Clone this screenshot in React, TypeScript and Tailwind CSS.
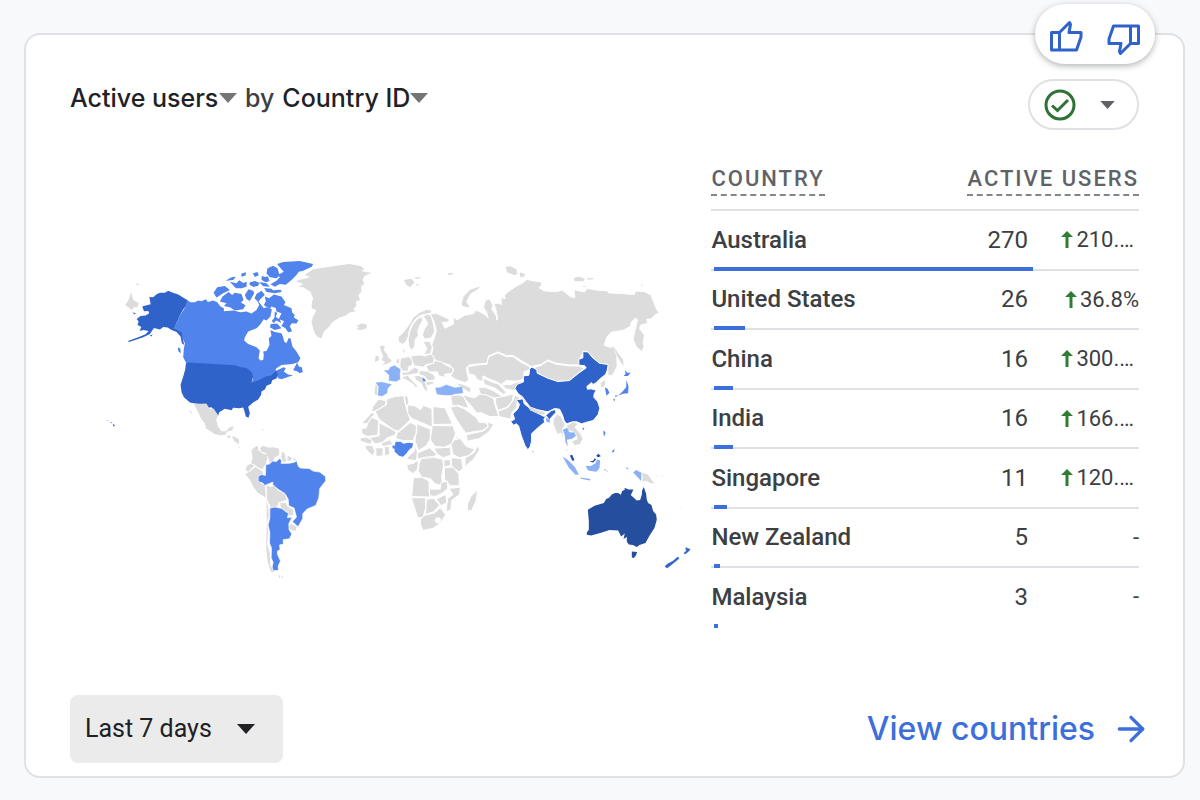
import { ArrowRight } from 'lucide-react'

interface CountryRow {
  country: string
  users: number
  change?: string
}

const rows: CountryRow[] = [
  { country: 'Australia', users: 270, change: '210.…' },
  { country: 'United States', users: 26, change: '36.8%' },
  { country: 'China', users: 16, change: '300.…' },
  { country: 'India', users: 16, change: '166.…' },
  { country: 'Singapore', users: 11, change: '120.…' },
  { country: 'New Zealand', users: 5 },
  { country: 'Malaysia', users: 3 }
]

const maxUsers = 270
const barShare = 74.5 // % of the table width taken by the longest bar

function Caret({ className }: { className: string }) {
  return (
    <svg viewBox="0 0 18 10" className={className} aria-hidden="true">
      <path d="M0 0h18L9 10z" fill="currentColor" />
    </svg>
  )
}

function ThumbIcon({ className = '' }: { className?: string }) {
  return (
    <svg viewBox="0 0 34 34" className={`h-[34px] w-[34px] ${className}`} fill="none" stroke="#2f62cb" strokeWidth="3" aria-hidden="true">
      <path d="M2.500 13.500h8v17.500h-8zM10.500 13.500L20.500 3.500l1 2-1.500 8H32v4.500l-4.500 13H10.500z" strokeLinejoin="round" />
    </svg>
  )
}

// Map shapes, grouped by region. Each region has its own origin.
function NorthAmerica() {
  return (
    <g>
      <g fill="#dcdcdc">
        <path d="M93 127L100 150 117 160 112 172 102 171 97 181 85 172 76 165 86 150ZM108 102l8-2 0 4-6 2z" />
        <path d="M588 93L610 87 632 82 615 75 640 58 680 52 720 46 750 42 785 49 793 57 785 63 800 67 817 68 795 77 788 90 794 100 784 110 785 125 776 135 781 150 768 155 770 168 760 177 768 184 750 188 738 197 720 203 700 215 684 235 672 245 665 265 655 262 645 250 640 235 635 215 640 200 650 180 637 176 635 165 640 145 632 125 610 112 595 110 610 103Z" />
      </g>
      <g fill="#5183ec">
        <path d="M264 152L272 157 285 157 295 152 305 154 318 148 324 156 340 152 352 157 362 170 372 175 372 184 400 182 422 187 440 185 455 191 470 180 478 165 472 150 482 162 492 175 500 172 516 178 512 200 500 212 492 208 480 225 470 235 445 245 435 262 433 272 445 282 470 292 480 302 476 325 482 332 490 330 492 315 490 305 500 303 509 285 507 265 515 258 512 240 525 246 545 250 550 262 553 275 560 280 566 265 572 265 578 290 590 305 602 325 595 337 578 342 545 345 530 355 520 370 530 362 552 352 558 355 552 365 565 374 580 376 562 382 545 388 535 385 530 375 500 384 475 394 455 400 460 385 445 365 430 356 405 349 262 341 250 320 252 295 255 280 245 258 223 235 237 202 258 168Z" />
        <path d="M532 42L550 36 600 33 640 42 636 50 610 62 597 65 590 75 575 90 558 104 540 102 525 110 512 103 530 92 540 82 535 75 552 65 540 52Z" />
        <path d="M503 55L520 47 533 55 537 68 540 76 530 85 510 82 500 70ZM493 114L515 116 520 121 543 119 545 126 525 130 500 126ZM478 96L500 100 510 110 490 109Z" />
        <path d="M368 140L386 126 397 135 405 128 425 132 431 150 423 158 437 166 430 178 405 182 390 172 372 168 380 160 360 155Z" />
        <path d="M341 128L352 112 375 108 390 120 370 130 350 143ZM390 95L410 100 418 91 430 99 441 95 440 110 425 115 408 115ZM377 92L395 82 408 80 400 90ZM424 71l14-4 0 9-13 4zM459 70l14-4 4 10-12 5zM450 97l16-4 13 6-4 8-14 4-12-7zM486 78l10 3 8-2 5 14-12 4-12-8z" />
        <path d="M435 135L446 118 460 122 463 130 450 153 440 147ZM470 132L485 122 495 135 482 147 475 156 464 145ZM495 140L508 145 522 134 545 140 557 157 552 165 575 175 577 188 585 195 582 203 596 211 590 221 576 220 570 229 577 244 565 247 557 235 545 228 553 214 537 207 545 190 530 185 528 174 515 170 510 177 492 165 498 155ZM525 185l7 4-4 12 12 8 4 10-14-7-9 7-5-6 8-10zM513 222L532 221 545 235 525 240 510 232Z" />
        <path d="M592 338L597 350 606 352 609 366 600 370 592 364 580 361ZM248 318L262 330 268 344 258 338ZM234 292l7 4 2 14-8-6z" />
      </g>
      <g fill="#2f63c9">
        <path d="M205 122L215 127 235 134 264 152 258 168 250 178 237 202 223 235 238 244 245 247 249 268 253 285 246 280 242 260 230 246 215 240 203 233 190 231 180 239 162 234 150 252 130 262 110 269 87 276 84 273 115 262 137 253 146 243 130 240 119 243 124 231 113 225 116 215 110 207 122 198 137 197 148 190 145 183 132 184 127 170 140 166 152 163 150 150 148 141 160 142 170 133 180 128 195 128ZM97 187l11 4-4 3zM148 258l10-5-3 6z" />
        <path d="M258 340L268 338 405 346 425 352 440 354 455 366 460 380 455 398 475 392 498 380 515 377 527 360 534 373 530 386 517 391 514 402 500 408 496 418 485 425 484 435 475 449 460 458 445 471 450 490 446 504 438 500 434 485 430 473 418 475 400 474 395 481 375 477 358 487 355 498 345 485 335 472 325 474 318 462 295 463 270 458 252 442 245 427 242 405 250 380 256 358Z" />
        <path d="M38 521l7 6-4 4zM30 516l6 2-2 2zM22 511l4 2-3 1z" />
      </g>
    </g>
  )
}

function SouthAmerica() {
  return (
    <g transform="translate(0 450)">
      <g fill="#dcdcdc">
        <path d="M281 10L300 12 320 12 330 28 341 26 355 46 349 60 354 80 365 94 378 94 390 82 403 79 396 92 380 96 378 104 365 107 345 103 318 85 315 72 305 58 295 38ZM268 30l6 6 4 8-7-6zM395 108L410 114 418 120 416 134 404 124ZM380 108l14 0-8 9z" />
        <path d="M455 153L462 144 474 137 476 152 492 163 502 163 502 180 498 192 488 208 475 203 462 193 454 190 458 175Z" />
        <path d="M480 145L490 138 505 143 520 142 538 147 538 165 523 174 522 186 510 190 506 175 500 160 485 156ZM547 155l8 6 4 24-8 2-7-14zM564 168l12 6-2 9-12-2zM580 172l8 8-5 4z" />
        <path d="M441 198L452 192 464 198 450 210 445 217 438 210ZM436 223L448 217 466 202 487 214 490 222 476 230 475 244 495 257 498 293 475 280 462 264 450 240Z" />
        <path d="M500 258L514 262 524 258 535 273 554 282 561 300 545 305 536 308 532 320 513 322 502 300ZM541 310L558 310 563 320 580 331 580 346 563 348 564 337 544 327ZM573 372L590 382 588 394 572 390 568 382Z" />
        <path d="M500 300L505 325 507 350 502 365 505 400 502 435 510 460 511 495 524 516 514 518 503 485 499 440 501 380ZM535 525l6 4-2 8zM545 528l3 0 0 8-4-1z" />
      </g>
      <path d="M450 76l20 5 12 2-14-2zM484 89l12 1-2 3-9-1zM414 140l6-1 4 4-7 1z" fill="#ededed" />
      <g fill="#5183ec" stroke="#fff" strokeWidth="2">
        <path d="M498 194L508 193 518 184 530 185 540 176 545 181 544 191 570 190 585 187 590 182 596 200 602 205 628 206 640 214 660 217 677 230 678 243 660 266 657 295 648 317 622 328 609 342 609 356 600 372 595 381 578 366 590 352 583 325 567 318 565 298 555 281 537 270 519 255 519 247 495 257 489 250 475 245 475 230 485 224 497 227Z" />
        <path d="M510 325L525 322 545 326 566 341 563 354 577 352 567 372 568 390 576 403 569 417 550 420 551 433 539 436 541 449 532 455 534 466 542 484 535 500 536 512 520 513 517 502 520 488 514 475 515 445 509 430 510 400 505 375 510 355Z" />
      </g>
    </g>
  )
}

function Eurasia() {
  return (
    <g transform="translate(720 0)">
      <g fill="#dcdcdc" stroke="#fff" strokeWidth="3" strokeLinejoin="round">
        <path d="M272 192L290 190 328 207 328 216 308 218 316 235 330 228 342 222 340 200 352 210 375 196 402 191 408 181 420 185 440 197 446 205 440 185 431 172 438 150 450 147 460 165 457 178 471 200 471 211 474 205 469 180 463 160 480 160 485 165 484 142 496 147 495 135 510 122 530 109 552 97 562 88 577 92 606 96 606 107 598 113 615 123 650 125 668 120 692 140 706 143 703 119 735 126 743 115 775 121 803 122 808 129 850 131 885 134 888 123 915 125 935 135 941 152 951 178 960 190 947 194 935 207 922 208 925 220 905 225 900 235 915 256 911 280 914 290 907 306 890 290 881 268 888 235 894 210 888 204 876 217 872 230 852 241 815 247 802 262 794 286 810 292 824 290 832 318 833 350 820 375 806 379 803 345 780 340 762 325 745 305 732 304 722 325 720 345 690 345 650 340 625 330 605 343 575 350 550 335 520 317 500 317 475 306 447 318 442 340 415 342 390 345 380 354 383 372 388 392 375 398 350 390 333 378 342 360 330 345 295 335 280 325 275 315 280 295 276 285 285 262 290 240 283 215Z" />
        <path d="M258 348L280 340 285 332 305 336 318 345 342 357 336 371 314 373 318 382 298 379 293 366 268 366ZM213 318L240 315 255 318 275 312 284 325 282 340 260 344 250 352 225 348 218 335Z" />
        <path d="M175 262L190 248 205 228 220 203 240 187 262 178 277 181 274 190 247 195 230 205 215 225 208 245 206 260 197 278 188 283 176 275ZM205 270L210 245 220 222 235 205 247 200 249 212 240 227 234 245 237 256 226 270 226 285 217 303 208 290ZM249 200L265 191 275 200 281 220 285 245 275 264 255 268 248 255 254 237 264 223 258 208ZM250 275L270 274 278 292 272 312 252 314 262 296ZM188 296l9 5-6 14z" />
        <path d="M180 325L208 320 218 330 218 345 205 352 208 364 190 364 181 352ZM170 328l13-4-4 18-11-3zM118 290L129 285 137 290 134 302 142 311 147 323 158 331 151 340 123 348 134 337 124 330 129 320ZM106 318L118 316 119 332 104 338ZM186 367L205 366 225 352 238 358 234 371 204 376 187 376Z" />
        <path d="M190 380L204 376 214 388 233 407 230 416 219 402 202 392 188 386ZM238 362L264 364 286 377 286 390 266 393 254 379 238 374ZM222 378L242 377 260 402 266 428 254 420 243 399 229 391ZM255 396L283 394 282 402 264 408ZM106 402L115 408 114 438 103 434Z" />
        <path d="M384 351L415 345 442 343 447 321 475 309 500 320 520 320 545 338 572 350 568 360 554 366 552 388 530 394 500 392 485 404 470 395 455 390 430 378 430 395 414 390 404 375 388 373Z" />
        <path d="M580 354L605 346 625 333 650 343 690 348 718 348 735 356 718 368 705 380 692 391 655 395 622 385 595 370Z" />
        <path d="M416 414L436 412 456 420 490 440 478 448 445 438 424 438ZM430 384L460 398 476 402 500 428 492 434 465 414 434 404ZM486 405L515 404 530 397 552 395 545 407 520 422 500 417ZM345 398L372 404 395 414 391 430 366 414Z" />
      </g>
      <g fill="#dcdcdc">
        <path d="M50 228L66 221 82 224 80 235 62 241 50 237 58 232ZM193 90L215 86 225 97 211 112 200 104ZM220 83l26-3-12 7zM228 102l12 2-8 3zM323 72l10-4 10 3-14 5zM366 162L372 140 391 119 422 109 416 117 392 132 380 154 390 173 370 169ZM498 50L514 49 530 58 534 71 524 76 502 66ZM541 67l16 6-4 7-12 1zM702 84L720 80 736 86 733 94 706 94ZM742 85l20-1-2 4-16 1zM728 107l13 1-8 3zM904 103l7 1-4 5zM824 288L834 308 851 329 852 349 844 338 831 315Z" />
      </g>
      <g fill="#8ab0f5" stroke="#fff" strokeWidth="1">
        <path d="M132 361L147 360 150 352 164 346 183 358 181 372 182 388 170 396 147 393 148 376ZM107 398L125 396 157 403 145 415 143 430 128 439 114 438 116 410Z" />
        <path d="M286 414L302 412 320 404 345 413 368 410 371 430 345 433 335 437 310 436 292 434Z" />
      </g>
      <path d="M247 382l8 5 4 8-8-1z" fill="#5183ec" />
    </g>
  )
}

function AfricaAndMiddleEast() {
  return (
    <g transform="translate(720 360)">
      <g fill="#dcdcdc" stroke="#fff" strokeWidth="3" strokeLinejoin="round">
        <path d="M332 112L352 108 372 116 392 130 410 143 418 157 440 159 446 170 428 182 400 186 378 190 362 167 345 140ZM380 195L400 190 430 184 446 172 442 155 462 164 448 186 420 206 383 214ZM333 78L356 75 372 80 388 116 372 112 356 106 338 108Z" />
        <path d="M368 74L388 80 405 84 420 73 440 75 462 86 466 104 478 140 450 140 424 128 412 130 394 107 380 92ZM468 84L490 80 522 72 518 94 502 112 476 122 468 100ZM475 124L504 114 520 92 526 76 542 84 532 98 532 112 516 130 514 148 478 140Z" />
        <path d="M98 112L116 88 140 92 137 106 110 122 96 128ZM66 160L96 128 106 132 96 142 82 162ZM106 124L140 105 141 88 165 80 192 77 196 100 202 122 212 150 176 184 162 180 118 148ZM193 77l11 2 4 20-9 9z" />
        <path d="M204 105L226 108 242 119 252 107 277 116 278 172 216 146 204 130ZM280 110L316 114 324 132 339 163 280 164ZM66 176L80 174 84 160 96 142 117 152 114 196 82 200 66 190ZM118 158L170 186 166 196 142 204 128 218 106 222 88 204 118 198Z" />
        <path d="M172 190L212 158 229 166 232 186 220 212 192 213 168 206ZM232 162L272 178 272 206 260 228 236 242 226 214ZM278 167L340 168 348 192 336 222 314 232 286 230 272 210ZM283 235L332 232 334 256 310 264 292 252ZM334 224L346 208 362 206 380 230 406 238 388 257 360 264 340 254ZM376 264L402 250 414 228 420 240 402 268 376 290ZM345 198l12 8-8 4z" />
        <path d="M335 264L366 266 370 296 358 307 335 288ZM232 250L270 234 292 254 276 264 234 267ZM200 266L224 244 226 228 234 248 230 272 208 270ZM238 282L246 264 272 260 308 268 312 286 306 322 310 348 286 342 272 326 246 322 236 304ZM201 285L222 280 236 270 234 298 220 312 204 300Z" />
        <path d="M221 324L246 322 268 334 270 382 216 380ZM268 358L302 358 304 338 324 334 324 356 308 370 286 380 270 378ZM314 294L340 292 358 312 359 348 332 348 314 328ZM328 356L362 352 360 374 336 392 334 420 320 427 322 404 324 386 340 374ZM290 388L318 374 322 398 304 408ZM260 388L282 386 300 406 282 426 258 434ZM215 384L258 384 258 414 250 444 234 444 222 406Z" />
        <path d="M242 450L256 436 284 430 302 414 318 434 304 458 280 476 250 482 243 466ZM384 402L394 380 414 360 409 394 395 424 383 421ZM61 204L80 202 98 212 92 224 62 214ZM74 228L98 226 106 246 98 258 80 240ZM108 234h22v24l-21 2zM134 230h14l3 24-16 4zM124 220L152 210 160 224 130 230ZM312 270h20l2 16-20 6z" />
        <circle cx="295" cy="452" r="8" fill="#fff" />
      </g>
      <path d="M168 216L182 216 192 222 205 219 220 220 218 232 208 240 200 251 190 261 178 258 165 246 164 232ZM158 228l6-2 0 10-5 0z" fill="#5183ec" />
    </g>
  )
}

function EastAsiaAndOceania() {
  return (
    <g transform="translate(1200 270)">
      <g fill="#2f63c9" stroke="#fff" strokeWidth="3" strokeLinejoin="round">
        <path d="M46 146L52 134 72 126 71 108 88 106 90 88 97 81 112 90 113 100 145 115 175 125 210 122 225 110 240 98 260 84 255 77 238 76 238 58 250 54 250 35 265 36 280 54 300 70 326 74 323 92 318 104 300 118 288 130 280 134 276 128 262 140 264 148 275 147 290 151 284 162 283 172 295 186 301 205 296 224 281 242 262 247 246 252 232 246 218 246 202 252 194 243 189 226 180 208 165 206 145 216 115 210 92 202 78 184 68 170 56 162Z" />
        <path d="M50 180L70 177 74 192 84 200 100 213 134 230 144 222 155 212 168 209 169 218 156 232 150 240 140 228 133 238 136 247 124 256 108 270 96 282 96 304 92 320 85 330 76 317 65 287 57 258 50 252 42 256 33 245 45 238 40 222 54 208 60 194Z" />
      </g>
      <g fill="#dcdcdc">
        <path d="M86 203L98 203 118 213 136 217 134 225 112 220 92 212ZM162 238L173 224 184 230 196 256 188 266 190 290 184 278 174 282 163 256ZM202 258L220 247 234 252 225 262 242 282 249 296 242 312 226 316 218 304 234 298 229 280 214 272 207 272ZM98 330l6 4-2 6-4-3zM200 327l6 5-3 1z" />
        <path d="M303 130l12-9 3 8-5 12-8 1zM429 398L446 405 456 420 466 432 452 429 440 423 429 426ZM318 390l8 4-2 5z" />
      </g>
      <path d="M468 408l8-2-6 6zM480 402l10 6 10 8-12-6zM540 500l8 6-4 0z" fill="#efefef" />
      <g fill="#8ab0f5">
        <path d="M190 270L203 264 209 277 225 278 229 288 218 297 202 300 205 320 198 308 196 288ZM138 235l12 2 1 12-10-3zM189 350L206 361 226 382 238 404 228 405 208 384ZM243 413l30 5-2 4-27-5zM258 378L274 379 288 370 293 358 302 362 300 385 291 396 266 392ZM314 388l6 2-4 4zM401 398L410 391 426 399 425 424 414 412ZM378 383l10 2-4 4z" />
      </g>
      <g fill="#5183ec">
        <path d="M377 92l8 7 9-1-9 10-13 0 6-6zM381 120L387 140 386 160 370 162 356 168 370 154 380 142ZM347 167l9 0-8 5zM341 176l6 3-3 6zM316 143l8 4 6 12-9 9zM312 271l6 7-4 12-2-6zM338 334l7-7-1 9-6 2zM249 264l6 1-5 7z" />
      </g>
      <g fill="#264e9f">
        <path d="M211 347l7-2 7 16-7 2zM270 365l11-2 5-8 4 4-9 9zM290 348l7-6 7 7-9 3z" />
        <path d="M265 510L285 498 313 490 320 478 329 474 336 465 346 460 356 460 364 465 368 454 376 450 375 444 387 449 402 449 394 466 412 482 422 481 427 465 428 452 433 442 440 462 442 480 446 490 456 496 461 514 470 524 472 540 465 565 450 588 438 610 420 616 412 622 400 616 388 614 382 606 382 592 372 598 376 581 365 590 356 572 330 571 305 579 275 587 262 585 262 578 268 570 268 545Z" />
        <path d="M397 635L413 637 409 648 402 656 397 653Z" />
      </g>
      <path d="M497 680L503 674 520 665 535 652 539 656 522 670 503 685ZM554 640L561 634 559 624 572 629 566 636 556 643Z" fill="#2f63c9" stroke="#2f63c9" strokeWidth="2" />
    </g>
  )
}

function WorldMap() {
  return (
    <svg viewBox="-90 0 1926 1020" className="h-auto w-full" role="img" aria-label="Active users by country">
      <NorthAmerica />
      <SouthAmerica />
      <Eurasia />
      <AfricaAndMiddleEast />
      <EastAsiaAndOceania />
    </svg>
  )
}

function CountryTable() {
  return (
    <table className="h-[460px] w-full border-collapse text-2xl text-[#3c4043]">
      <thead>
        <tr className="h-[45px] border-b-2 border-[#dfe1e4] text-[22px] leading-7 text-[#5f6368]">
          <th className="p-0 text-left align-top font-medium">
            <span className="inline-block border-b-2 border-dashed border-[#80868b] pb-px tracking-[2px]">COUNTRY</span>
          </th>
          <th colSpan={2} className="p-0 text-right align-top font-medium">
            <span className="inline-block border-b-2 border-dashed border-[#80868b] pb-px tracking-[2px]">ACTIVE USERS</span>
          </th>
        </tr>
      </thead>
      <tbody>
        {rows.map((row) => (
          <tr key={row.country} className="relative border-b-2 border-[#dfe1e4] last:border-0">
            <th scope="row" className="p-0 text-left font-medium">
              {row.country}
              <span
                className="absolute -bottom-[3px] left-[3px] h-1 bg-[#3c6fdb]"
                style={{ width: `${(row.users / maxUsers) * barShare}%` }}
              />
            </th>
            <td className="p-0 text-right">{row.users}</td>
            <td className="w-[111px] p-0 text-[22px]">
              <div className={`flex items-center justify-end ${row.change?.endsWith('…') ? 'pr-[5px]' : ''}`}>
                {row.change && (
                  <svg viewBox="0 0 12 17" className="mr-[3px] h-[17px] w-3" aria-label="up">
                    <path d="M6 0l6 6H7.500v11h-3V6H0z" fill="#2e7d32" />
                  </svg>
                )}
                {row.change ?? '-'}
              </div>
            </td>
          </tr>
        ))}
      </tbody>
    </table>
  )
}

export default function App() {
  return (
    <main className="min-h-screen bg-[#f8f9fb] pt-[33px] pr-[15px] pb-[22px] pl-6 font-[Roboto,sans-serif]">
      <section className="relative rounded-2xl border-2 border-[#dfe1e4] bg-white px-11 pt-11 pb-[13px]">
        {/* Feedback */}
        <div className="absolute -top-[31px] right-7 flex h-[60px] w-[120px] items-center justify-between rounded-full bg-white px-[14px] shadow-[0_2px_6px_rgba(60,64,67,0.4)]">
          <button type="button" aria-label="Helpful" className="pt-1">
            <ThumbIcon />
          </button>
          <button type="button" aria-label="Not helpful" className="pt-3">
            <ThumbIcon className="rotate-180" />
          </button>
        </div>

        <header className="flex items-start justify-between">
          <h2 className="flex items-center text-[25px] leading-[38px] font-medium text-[#202124] font-[Inter,sans-serif]">
            <select aria-label="Metric" className="appearance-none bg-transparent">
              <option>Active users</option>
            </select>
            <Caret className="mr-2 h-[10px] w-[18px] text-[#757575]" />
            <span className="mr-2 text-[#3c4043]">by</span>
            <select aria-label="Dimension" className="appearance-none bg-transparent">
              <option>Country ID</option>
            </select>
            <Caret className="h-[10px] w-[18px] text-[#757575]" />
          </h2>
          <button
            type="button"
            aria-label="Data quality"
            className="flex h-[51px] w-[111px] items-center justify-between rounded-full border-2 border-[#dfe1e4] pr-[22px] pl-[14px]"
          >
            <svg viewBox="0 0 32 32" className="h-8 w-8" fill="none" stroke="#2e7235" strokeWidth="3" aria-hidden="true">
              <circle cx="16" cy="16" r="14" />
              <path d="M8 16.500l5.500 5L24 11" />
            </svg>
            <Caret className="h-2 w-[15px] text-[#5f6368]" />
          </button>
        </header>

        <div className="mt-[35px] flex items-start">
          <div className="mt-[85px] min-w-0 flex-1">
            <WorldMap />
          </div>
          <div className="w-2/5">
            <CountryTable />
          </div>
        </div>

        <footer className="mt-[70px] flex items-center justify-between">
          <label className="relative flex items-center">
            <select
              aria-label="Date range"
              className="h-[68px] w-[213px] appearance-none rounded-lg bg-[#ebebeb] pl-[15px] text-[25px] text-[#202124]"
            >
              <option>Last 7 days</option>
            </select>
            <Caret className="pointer-events-none absolute right-7 h-[10px] w-[18px] text-[#202124]" />
          </label>
          <a href="#countries" className="-mr-3 flex items-center gap-4 text-[32px] font-medium text-[#3c6fdb] font-[Inter,sans-serif]">
            View countries
            <ArrowRight className="h-10 w-10" strokeWidth={2} />
          </a>
        </footer>
      </section>
    </main>
  )
}
